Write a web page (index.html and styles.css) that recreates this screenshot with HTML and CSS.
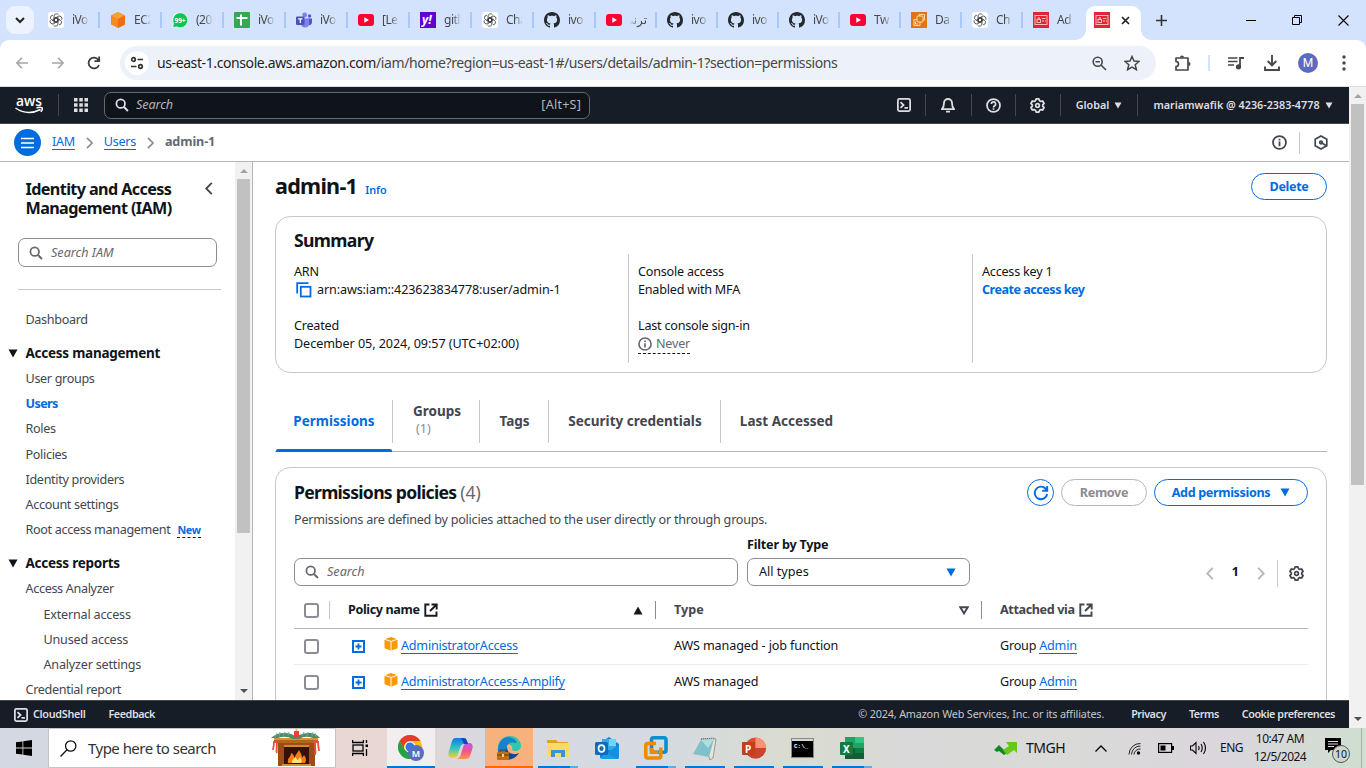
FILE: index.html
```html
<!DOCTYPE html>
<html lang="en">
<head>
<meta charset="utf-8">
<title>admin-1 | IAM</title>
<link rel="stylesheet" href="styles.css">
</head>
<body>
<svg class="sprite" xmlns="http://www.w3.org/2000/svg">
  <symbol id="gpt" viewBox="0 0 16 16"><rect width="16" height="16" rx="3" fill="#fff"/><g fill="none" stroke="#333" stroke-width=".75"><path id="petal" d="M6 8.900V4.200a2.500 2.500 0 0 1 4.600-1.300M10 7.100L7.900 5.900 4.400 8"/><path d="M6 8.900V4.200a2.500 2.500 0 0 1 4.600-1.300M10 7.100L7.900 5.900 4.400 8" transform="rotate(60 8 8)"/><path d="M6 8.900V4.200a2.500 2.500 0 0 1 4.600-1.300M10 7.100L7.900 5.900 4.400 8" transform="rotate(120 8 8)"/><path d="M6 8.900V4.200a2.500 2.500 0 0 1 4.600-1.300M10 7.100L7.900 5.900 4.400 8" transform="rotate(180 8 8)"/><path d="M6 8.900V4.200a2.500 2.500 0 0 1 4.600-1.300M10 7.100L7.900 5.900 4.400 8" transform="rotate(240 8 8)"/><path d="M6 8.900V4.200a2.500 2.500 0 0 1 4.600-1.300M10 7.100L7.900 5.900 4.400 8" transform="rotate(300 8 8)"/></g></symbol>
  <symbol id="cube" viewBox="0 0 16 16"><path d="M8 0l7 3.500v9L8 16l-7-3.500v-9z" fill="#f58a20"/><path d="M8 0l7 3.500L8 7 1 3.500z" fill="#fa9f2f"/><path d="M8 7l7-3.500v9L8 16z" fill="#ee6c12"/></symbol>
  <symbol id="sheet" viewBox="0 0 16 16"><rect width="16" height="16" rx="1" fill="#34a853"/><path d="M7 2.500v11M2.500 6h11" stroke="#fff" stroke-width="2" fill="none"/></symbol>
  <symbol id="teams" viewBox="0 0 16 16"><circle cx="8.700" cy="3" r="2.400" fill="#7b83eb"/><circle cx="13.600" cy="4" r="1.700" fill="#5059c9"/><path d="M11 6.500h5v4a2.800 2.800 0 0 1-4 2.500z" fill="#5059c9"/><path d="M5 6.500h8v5a4 4 0 0 1-8 0z" fill="#7b83eb"/><rect y="4.500" width="8.500" height="8.500" rx="1" fill="#4b53bc"/><path d="M2.200 6.800h4.200M4.300 6.800v4.200" stroke="#fff" stroke-width="1.200"/></symbol>
  <symbol id="yt" viewBox="0 0 16 16"><rect y="2" width="16" height="12" rx="3" fill="#ff0033"/><path d="M6.300 5.300v5.400L11 8z" fill="#fff"/></symbol>
  <symbol id="gh" viewBox="0 0 16 16"><path fill="#24292f" d="M8 0C3.580 0 0 3.580 0 8c0 3.540 2.290 6.530 5.470 7.590.4.070.550-.17.550-.38 0-.19-.010-.82-.010-1.490-2.010.370-2.530-.490-2.690-.940-.090-.230-.480-.940-.820-1.130-.280-.150-.680-.520-.010-.530.630-.010 1.080.580 1.230.820.720 1.210 1.870.870 2.330.660.070-.520.280-.870.510-1.070-1.780-.200-3.640-.890-3.640-3.950 0-.870.310-1.590.820-2.150-.080-.200-.360-1.020.080-2.120 0 0 .670-.210 2.200.820.640-.180 1.320-.270 2-.270s1.360.090 2 .270c1.530-1.040 2.200-.820 2.200-.820.440 1.100.160 1.920.080 2.120.510.560.820 1.270.820 2.150 0 3.070-1.870 3.750-3.650 3.950.290.250.540.730.540 1.480 0 1.070-.010 1.930-.010 2.200 0 .210.150.460.550.380A8.010 8.010 0 0 0 16 8c0-4.420-3.580-8-8-8z"/></symbol>
  <symbol id="ec2" viewBox="0 0 16 16"><rect width="16" height="16" fill="#e27511"/><g fill="none" stroke="#ffdcae" stroke-width="1"><rect x="6" y="4" width="6" height="6" rx="1"/><path d="M8 4V2.500h5.500V8H12M6 7.500H3v6h6V10M4.500 9.500v2.500H7"/></g></symbol>
  <symbol id="iam" viewBox="0 0 16 16"><rect width="16" height="16" fill="#dd2737"/><g fill="none" stroke="#ffb8bd" stroke-width="1"><rect x="2" y="3.500" width="12" height="9"/><rect x="4" y="7.500" width="3.500" height="3"/><path d="M5 7.500V5.800h1.500v1.700M9 6.500h3.500M9 9h2M12 9h1"/></g></symbol>
  <symbol id="search" viewBox="0 0 16 16"><circle cx="6.500" cy="6.500" r="4.900" fill="none" stroke="currentColor" stroke-width="2"/><path d="M10 10l4.800 4.800" stroke="currentColor" stroke-width="2.200"/></symbol>
  <symbol id="shell" viewBox="0 0 16 16"><rect x="1" y="1" width="14" height="14" rx="1.800" fill="none" stroke="currentColor" stroke-width="2"/><path d="M4 4.700L7.500 8 4 11.300M8.500 11.300h4" fill="none" stroke="currentColor" stroke-width="2"/></symbol>
  <symbol id="gear" viewBox="0 0 16 16"><path fill="none" stroke="currentColor" stroke-width="1.900" stroke-linejoin="round" d="M6.500 1h3l.7 2 1.300.7 2-.5 1.500 2.600L13.600 7.300v1.400l1.400 1.500-1.500 2.600-2-.5-1.300.7-.7 2h-3l-.7-2-1.300-.7-2 .5L1 10.200l1.400-1.500V7.300L1 5.800l1.500-2.600 2 .5L5.800 3z"/><circle cx="8" cy="8" r="2" fill="none" stroke="currentColor" stroke-width="1.800"/></symbol>
  <symbol id="info" viewBox="0 0 16 16"><circle cx="8" cy="8" r="6.900" fill="none" stroke="currentColor" stroke-width="1.900"/><path d="M8 7v5M8 4v1.800" stroke="currentColor" stroke-width="1.900"/></symbol>
  <symbol id="down" viewBox="0 0 10 9"><path d="M.5.500h9L5 8.500z" fill="currentColor"/></symbol>
  <symbol id="right" viewBox="0 0 8 14"><path d="M1 1l6 6-6 6" fill="none" stroke="currentColor" stroke-width="2"/></symbol>
  <symbol id="left" viewBox="0 0 8 14"><path d="M7 1L1 7l6 6" fill="none" stroke="currentColor" stroke-width="2"/></symbol>
  <symbol id="ext" viewBox="0 0 14 14"><path d="M5.500 1.500H1.300v11.200h11.200V8.500M7.500 1.500h5.200v5M12.500 1.700L6 8" fill="none" stroke="currentColor" stroke-width="1.900"/></symbol>
  <symbol id="plus" viewBox="0 0 13 13"><rect x="1" y="1" width="11" height="11" fill="none" stroke="#006ce0" stroke-width="2"/><path d="M6.500 3.500v6M3.500 6.500h6" stroke="#006ce0" stroke-width="1.800"/></symbol>
  <symbol id="box" viewBox="0 0 14 14"><path d="M7 0l5.800 2L7 4 1.200 2z" fill="#ff9900"/><path d="M.5 2.700L6.500 4.700V13.500L.5 11.300zM13.500 2.700L7.500 4.700V13.500l6-2.200z" fill="#ff9900"/></symbol>
</svg>

<header class="browser">
  <div class="tabstrip">
    <button class="tab-search"><svg width="10" height="8" viewBox="0 0 10 8"><path d="M1 2l4 4 4-4" fill="none" stroke="#222" stroke-width="2"/></svg></button>
    <div class="tabs">
      <div class="tab"><svg><use href="#gpt"/></svg><span>iVo</span></div>
      <div class="tab"><svg><use href="#cube"/></svg><span>EC2</span></div>
      <div class="tab"><svg viewBox="0 0 16 16"><path d="M.5 15.500l1-4A7.500 7.500 0 1 1 5 15z" fill="#10c454" stroke="#fff" stroke-width=".8"/><text x="8" y="10.800" text-anchor="middle" class="wa-count">99+</text></svg><span>(20</span></div>
      <div class="tab"><svg><use href="#sheet"/></svg><span>iVo</span></div>
      <div class="tab"><svg><use href="#teams"/></svg><span>iVo</span></div>
      <div class="tab"><svg><use href="#yt"/></svg><span>[Le</span></div>
      <div class="tab"><svg viewBox="0 0 16 16"><rect width="16" height="16" fill="#6001d2"/><text x="2" y="11.500" class="yahoo-y">y!</text></svg><span>gitl</span></div>
      <div class="tab"><svg><use href="#gpt"/></svg><span>Cha</span></div>
      <div class="tab"><svg><use href="#gh"/></svg><span>ivo</span></div>
      <div class="tab narrow"><svg><use href="#yt"/></svg><span dir="rtl">ترني</span></div>
      <div class="tab narrow"><svg><use href="#gh"/></svg><span>ivo</span></div>
      <div class="tab narrow"><svg><use href="#gh"/></svg><span>ivo</span></div>
      <div class="tab narrow"><svg><use href="#gh"/></svg><span>iVo</span></div>
      <div class="tab narrow"><svg><use href="#yt"/></svg><span>Tw</span></div>
      <div class="tab narrow"><svg><use href="#ec2"/></svg><span>Da</span></div>
      <div class="tab narrow"><svg><use href="#gpt"/></svg><span>Ch</span></div>
      <div class="tab narrow last"><svg><use href="#iam"/></svg><span>Ad</span></div>
    </div>
    <div class="tab-active"><svg class="fav"><use href="#iam"/></svg><svg width="9" height="9" viewBox="0 0 9 9"><path d="M1 1l7 7M8 1L1 8" stroke="#222" stroke-width="1.700"/></svg></div>
    <svg class="new-tab" width="11" height="11" viewBox="0 0 11 11"><path d="M5.500 0v11M0 5.500h11" stroke="#333" stroke-width="1.600"/></svg>
    <div class="win-controls">
      <svg width="10" height="10" viewBox="0 0 10 10"><path d="M0 5.500h10" stroke="#000"/></svg>
      <svg width="10" height="10" viewBox="0 0 10 10"><path d="M.5 2.500h7v7h-7zM2.500 2.500v-2h7v7h-2" fill="none" stroke="#000"/></svg>
      <svg width="11" height="11" viewBox="0 0 11 11"><path d="M.5.500l10 10M10.500.500l-10 10" stroke="#000" stroke-width="1.100"/></svg>
    </div>
  </div>
  <div class="toolbar">
    <div class="nav-buttons">
      <svg width="12" height="12" viewBox="0 0 12 12" fill="none" stroke="#a7a7a7" stroke-width="1.600"><path d="M12 6H1M6 .8L.9 6 6 11.200"/></svg>
      <svg width="12" height="12" viewBox="0 0 12 12" fill="none" stroke="#a7a7a7" stroke-width="1.600"><path d="M0 6h11M6 .8L11.100 6 6 11.200"/></svg>
      <svg width="14" height="14" viewBox="0 0 14 14" fill="none" stroke="#3c3c3c" stroke-width="1.800"><path d="M12 9A5.400 5.400 0 1 1 11.300 3.800L12.300 5M12.200.500V5.200H7.500"/></svg>
    </div>
    <div class="omnibox">
      <span class="site-info"><svg width="14" height="14" viewBox="0 0 14 14" fill="none" stroke="#333" stroke-width="1.700"><circle cx="3.500" cy="3.500" r="1.800"/><path d="M7.500 3.500H13M1 10.500h5.500"/><circle cx="10.500" cy="10.500" r="1.800"/></svg></span>
      <span class="url"><b>us-east-1.console.aws.amazon.com</b>/iam/home?region=us-east-1#/users/details/admin-1?section=permissions</span>
      <svg class="zoom" width="15" height="15" viewBox="0 0 15 15" fill="none" stroke="#474747" stroke-width="1.600"><circle cx="5.700" cy="5.700" r="4.500"/><path d="M9 9l5 5M3.500 5.700h4.400"/></svg>
      <svg width="16" height="16" viewBox="0 0 16 16" fill="none" stroke="#474747" stroke-width="1.500"><path d="M8 1.500l2 4.600 5 .4-3.800 3.300 1.200 4.900L8 12.100l-4.400 2.600 1.200-4.900L1 6.500l5-.4z"/></svg>
    </div>
    <svg class="puzzle" width="18" height="17" viewBox="0 0 18 17"><path d="M2 3h12v12H2v-3.500a2 2 0 0 0 0-5z" fill="none" stroke="#474747" stroke-width="1.700" stroke-linejoin="round"/><path d="M6 2.500a2 2 0 0 1 4 0M14.500 7a2 2 0 0 1 0 4z" fill="#474747"/></svg>
    <i class="tool-sep"></i>
    <svg class="music" width="17" height="14" viewBox="0 0 17 14"><path d="M0 2h9.500M0 5.500h9.500M0 9h6" stroke="#474747" stroke-width="1.700"/><path d="M12 10.500V2h4" fill="none" stroke="#474747" stroke-width="1.800"/><circle cx="10.500" cy="10.800" r="2.600" fill="#474747"/></svg>
    <svg class="download" width="16" height="16" viewBox="0 0 16 16" fill="none" stroke="#474747" stroke-width="1.900"><path d="M8 0v10M3.700 6L8 10.300 12.300 6M1 11.500V15h14v-3.500"/></svg>
    <span class="avatar">M</span>
    <svg class="kebab" width="4" height="16" viewBox="0 0 4 16" fill="#474747"><circle cx="2" cy="2" r="1.700"/><circle cx="2" cy="8" r="1.700"/><circle cx="2" cy="14" r="1.700"/></svg>
  </div>
</header>

<div class="viewport">
  <div class="page">
    <nav class="aws-nav">
      <svg class="aws-logo" width="28" height="20" viewBox="0 0 28 20"><text x="1" y="11" textLength="26" lengthAdjust="spacingAndGlyphs">aws</text><path d="M.5 13c8 5.500 17 5.500 25 1.500M21.500 13c2-.8 4.500-.8 5.500-.2.500.700 0 2.700-1.300 4" fill="none" stroke="#fff" stroke-width="1.500"/></svg>
      <i class="nav-sep"></i>
      <svg class="apps" width="14" height="14" viewBox="0 0 14 14" fill="#dedee3"><path d="M0 0h3.500v3.500H0zM5.300 0h3.500v3.500H5.300zM10.500 0H14v3.500h-3.500zM0 5.300h3.500v3.500H0zM5.300 5.300h3.500v3.500H5.300zM10.500 5.300H14v3.500h-3.500zM0 10.500h3.500V14H0zM5.300 10.500h3.500V14H5.300zM10.500 10.500H14V14h-3.500z"/></svg>
      <div class="nav-search"><svg><use href="#search"/></svg><em>Search</em><span>[Alt+S]</span></div>
      <div class="nav-tools">
        <div class="nt nt-shell"><svg width="14" height="14"><use href="#shell"/></svg></div>
        <div class="nt nt-bell"><svg width="14" height="15" viewBox="0 0 14 15" fill="none" stroke="currentColor" stroke-width="1.800"><path d="M7 1a4 4 0 0 0-4 4c0 3-.5 4.500-2 6.200h12C11.500 9.500 11 8 11 5a4 4 0 0 0-4-4zM5 13.700h4"/></svg></div>
        <div class="nt nt-help"><svg width="15" height="15" viewBox="0 0 16 16" fill="none" stroke="currentColor" stroke-width="1.900"><circle cx="8" cy="8" r="6.900"/><path d="M5.700 6.500a2.300 2.300 0 1 1 3.500 1.900c-.9.500-1.200.8-1.200 1.600M8 11v1.600"/></svg></div>
        <div class="nt nt-gear"><svg width="15" height="15"><use href="#gear"/></svg></div>
        <div class="nt nt-global"><span>Global</span><svg width="8" height="7"><use href="#down"/></svg></div>
        <div class="nt nt-account"><span>mariamwafik @ 4236-2383-4778</span><svg width="8" height="7"><use href="#down"/></svg></div>
      </div>
    </nav>

    <div class="crumbs">
      <button class="menu"><svg width="13" height="12" viewBox="0 0 13 12"><path d="M0 1.500h13M0 6h13M0 10.500h13" stroke="#fff" stroke-width="1.600"/></svg></button>
      <a>IAM</a><svg class="crumb-arrow"><use href="#right"/></svg><a>Users</a><svg class="crumb-arrow"><use href="#right"/></svg><b>admin-1</b>
      <svg class="crumb-info" width="15" height="15"><use href="#info"/></svg><i></i>
      <svg width="14" height="15" viewBox="0 0 14 15" fill="none" stroke="#424650" stroke-width="1.700"><path d="M7 1l5.800 3.300v6.500L7 14l-5.800-3.200V4.300z"/><circle cx="7" cy="7.500" r="1.300"/><path d="M7 7.500l5 3"/></svg>
    </div>

    <div class="content">
      <aside class="sidebar">
        <div class="side-main">
          <div class="side-title"><h2><span>Identity and Access</span><br><span>Management (IAM)</span></h2><svg width="8" height="13"><use href="#left"/></svg></div>
          <div class="field side-search"><svg><use href="#search"/></svg><em>Search IAM</em></div>
          <hr>
          <ul class="side-list">
            <li class="dash">Dashboard</li>
            <li class="group"><svg width="10" height="9"><use href="#down"/></svg><span>Access management</span></li>
            <li>User groups</li><li class="current">Users</li><li>Roles</li><li>Policies</li><li>Identity providers</li><li>Account settings</li>
            <li>Root access management <b class="new">New</b></li>
            <li class="group"><svg width="10" height="9"><use href="#down"/></svg><span>Access reports</span></li>
            <li>Access Analyzer</li><li class="sub">External access</li><li class="sub">Unused access</li><li class="sub">Analyzer settings</li><li>Credential report</li>
          </ul>
        </div>
        <div class="scrollbar side-scroll"><i class="arrow up"></i><i class="thumb"></i><i class="arrow dn"></i></div>
      </aside>

      <main>
        <div class="heading"><h1>admin-1</h1><a>Info</a><button class="btn delete"><span>Delete</span></button></div>
        <section class="card summary">
          <h2>Summary</h2>
          <div class="columns">
            <div><p>ARN</p><p class="arn"><svg width="16" height="16" viewBox="0 0 16 16" fill="none" stroke="#006ce0" stroke-width="1.800"><path d="M1.200 11.500V1.200h11.300"/><rect x="4.800" y="4.800" width="9.700" height="9.700"/></svg><span>arn:aws:iam::423623834778:user/admin-1</span></p><p class="gap">Created</p><p class="date-value">December 05, 2024, 09:57 (UTC+02:00)</p></div>
            <div><p>Console access</p><p>Enabled with MFA</p><p class="gap">Last console sign-in</p><p class="never"><span><svg width="14" height="14"><use href="#info"/></svg>Never</span></p></div>
            <div><p>Access key 1</p><p class="key">Create access key</p></div>
          </div>
        </section>

        <div class="page-tabs">
          <div class="pt on"><span>Permissions</span></div>
          <div class="pt pt-groups"><span>Groups</span><small>(1)</small></div>
          <div class="pt pt-tags"><span>Tags</span></div>
          <div class="pt pt-sec"><span>Security credentials</span></div>
          <div class="pt pt-last"><span>Last Accessed</span></div>
        </div>

        <section class="card policies">
          <div class="pol-head">
            <h2><span>Permissions policies</span> <small>(4)</small></h2>
            <button class="btn round"><svg width="16" height="16" viewBox="0 0 16 16" fill="none" stroke="#006ce0" stroke-width="1.900"><path d="M14.200 9A6.300 6.300 0 1 1 12.500 3.500L14 5.300M14.200 1v4.800H9.300"/></svg></button>
            <button class="btn remove"><span>Remove</span></button>
            <button class="btn add"><span>Add permissions</span><svg width="10" height="9"><use href="#down"/></svg></button>
          </div>
          <p class="desc">Permissions are defined by policies attached to the user directly or through groups.</p>
          <p class="filter-label"><span>Filter by Type</span></p>
          <div class="filters">
            <div class="field f-search"><svg><use href="#search"/></svg><em>Search</em></div>
            <div class="field f-type"><span>All types</span><svg width="10" height="9"><use href="#down"/></svg></div>
            <div class="pager"><svg width="8" height="13"><use href="#left"/></svg><b>1</b><svg width="8" height="13"><use href="#right"/></svg><i></i><svg class="pgear" width="15" height="15"><use href="#gear"/></svg></div>
          </div>
          <div class="table">
            <div class="tr th">
              <i class="check"></i><i class="vline"></i>
              <div class="c-name"><b>Policy name</b><svg width="14" height="14"><use href="#ext"/></svg><svg class="sort" width="10" height="9" viewBox="0 0 10 9"><path d="M5 .5L9.500 8.500h-9z" fill="#16191f"/></svg></div>
              <div class="c-type"><b>Type</b><svg class="sort" width="10" height="9" viewBox="0 0 10 9"><path d="M1.300 1.200h7.400L5 7.400z" fill="none" stroke="#424650" stroke-width="1.900"/></svg></div>
              <div class="c-via"><b>Attached via</b><svg width="14" height="14"><use href="#ext"/></svg></div>
            </div>
            <div class="tr"><i class="check"></i><svg class="expand"><use href="#plus"/></svg><div class="r-name"><svg><use href="#box"/></svg><a>AdministratorAccess</a></div><div class="r-type">AWS managed - job function</div><div class="r-via">Group <a>Admin</a></div></div>
            <div class="tr"><i class="check"></i><svg class="expand"><use href="#plus"/></svg><div class="r-name"><svg><use href="#box"/></svg><a>AdministratorAccess-Amplify</a></div><div class="r-type">AWS managed</div><div class="r-via">Group <a>Admin</a></div></div>
          </div>
        </section>
      </main>
    </div>

    <footer>
      <svg width="14" height="14"><use href="#shell"/></svg><b class="f-shell">CloudShell</b><b class="f-feedback">Feedback</b>
      <span class="copy">© 2024, Amazon Web Services, Inc. or its affiliates.</span><b class="f-privacy">Privacy</b><b class="f-terms">Terms</b><b class="f-cookie">Cookie preferences</b>
    </footer>
  </div>
  <div class="scrollbar page-scroll"><i class="arrow up"></i><i class="thumb"></i><i class="arrow dn"></i></div>
</div>

<div class="taskbar">
  <div class="start"><svg width="16" height="16" viewBox="0 0 16 16"><path d="M0 2.300L6.500 1.400v6.200H0zM7.300 1.300L16 0v7.600H7.300zM0 8.400h6.500v6.200L0 13.700zM7.300 8.400H16V16l-8.700-1.300z"/></svg></div>
  <div class="search-box">
    <svg width="17" height="17" viewBox="0 0 17 17" fill="none" stroke="#111" stroke-width="1.300"><circle cx="10.700" cy="6" r="5.200"/><path d="M7 9.800L.5 16.500"/></svg>
    <span>Type here to search</span>
    <svg class="fire" width="52" height="38" viewBox="0 0 52 38"><path d="M4 9h44v5H4z" fill="#b4641d"/><path d="M4 9h44v2H4z" fill="#dc9036"/><path d="M8 14h37v23H8z" fill="#9c4d14"/><path d="M14 18h25v19H14z" fill="#351108"/><path d="M14 16h25v2H14z" fill="#d58a32"/><path d="M18 34c-1-6 3-5 3-10 3 1 3 4 4 5 0-4 3-5 4-8 2 4 3 5 3 8 1-2 2-2 2-3 3 4 2 6 1 8z" fill="#f47e16"/><path d="M22 34c0-4 2-4 3-6 2 2 2 3 3 3l2-3c2 3 2 4 1 6z" fill="#ffe17d"/><path d="M12 35h29v2H12z" fill="#d78e36"/><path d="M1 9q8-7 20-4 5 2 5 4 0-2 6-4 12-3 18 4l-7 0q-8-3-14 1h-6q-8-4-15-1z" fill="#4c8a6a"/><g stroke="#6fa98a" stroke-width="1" fill="none"><path d="M5 9l2-5M9 8l1-5M13 7l2-4M18 7l1-4M32 7l2-4M37 7l1-4M42 7l1-4M46 8l-1-4"/></g><path d="M24 2h5v7h-5z" fill="#e8442d"/><circle cx="26.500" cy="1" r="1" fill="#f7b32f"/><path d="M6 11c3 5-1 9 1 13M4 12c0 6-1 7-1 9M46 11c-3 5 1 9-1 15M48 12c0 6 1 8 1 10" fill="none" stroke="#e75142" stroke-width="1.800"/></svg>
  </div>
  <div class="task-view"><svg width="16" height="16" viewBox="0 0 16 16" fill="none" stroke="#000" stroke-width="1.300"><rect x="1" y="5" width="10" height="6"/><path d="M.6 0v2.500h10.800V0M.6 16v-2.500h10.800V16M14.500 0v3M14.500 9v7"/><path d="M13.500 4.500h2.500v2.500h-2.500z" fill="#000" stroke="none"/></svg></div>
  <div class="apps-row">
    <div class="app lit"><svg width="26" height="26" viewBox="0 0 26 26"><circle cx="12" cy="12" r="12" fill="#fbc116"/><path d="M1.600 6a12 12 0 0 1 20.800 0H12a6 6 0 0 0-5.200 9z" fill="#e33b2e"/><path d="M1.600 6a12 12 0 0 0 10.400 18l5.200-9H6.800z" fill="#24a249"/><circle cx="12" cy="12" r="5.600" fill="#fff"/><circle cx="12" cy="12" r="4.500" fill="#3478e8"/><circle cx="18" cy="18" r="8" fill="#5c6bc0"/><text x="18" y="21.500" text-anchor="middle" class="chrome-m">M</text></svg></div>
    <div class="app idle"><svg width="25" height="23" viewBox="0 0 25 23"><defs><linearGradient id="c1" x2="0" y2="1"><stop stop-color="#1874e8"/><stop offset=".5" stop-color="#2cc5c2"/><stop offset="1" stop-color="#ffd02b"/></linearGradient><linearGradient id="c2" x2="0" y2="1"><stop stop-color="#b45cf0"/><stop offset=".5" stop-color="#f55389"/><stop offset="1" stop-color="#ff9645"/></linearGradient></defs><path d="M7 1h9q2 0 3 3l1 3h-4q-3 0-4 4l-2 6q-1 4-4 4H4q-5 0-3-7L4 4q1-3 3-3z" fill="url(#c1)"/><path d="M18 22H9q3-1 4-5l2-7q1-4 5-4h2q4 1 2 7l-2 6q-1 3-4 3z" fill="url(#c2)"/><path d="M13 1h3q2 0 3 3l1 3h-4z" fill="#1548b5"/></svg></div>
    <div class="app edge"><svg width="24" height="24" viewBox="0 0 24 24"><path d="M1 11C2 4 7 0 13 0c7 0 11 5 11 10s-6 6-9 4c2-4-3-7-7-5-3 0-6 1-7 2z" fill="#32c5ac"/><path d="M1 12C2 4 7 1 12 1c5 1 9 5 7 6-4-1-7-1-9 3 0 5 2 9 11 8-4 6-10 7-15 4-4-3-6-6-5-10z" fill="#1584cc"/><path d="M10 12c0 5 5 8 12 5-5 8-15 8-19 3 5-1 5-4 7-8z" fill="#0b4a8f"/><rect y="16" width="12" height="8" rx="1" fill="#b9701d"/><path d="M3 16v-2h6v2M0 19h12" fill="none" stroke="#6b390d"/><path d="M5 18h2v3H5z" fill="#ffd55d"/></svg></div>
    <div class="app run stacked"><svg width="22" height="19" viewBox="0 0 22 19"><path d="M0 1h9l2 2h10v14H0z" fill="#dda520"/><path d="M0 4h22v14H0z" fill="#ffd968"/><path d="M4 11h14v7h-4v-4H8v4H4z" fill="#3794d7"/></svg></div>
    <div class="app idle"><svg width="24" height="22" viewBox="0 0 24 22"><path d="M5 6l9-6 10 7v14H5z" fill="#1c80d4"/><path d="M7 2h14v11H7z" fill="#32a9e9"/><path d="M14 2h7v7h-7z" fill="#6dd5ff"/><path d="M5 21l19-13v12q0 2-2 2H7z" fill="#1b9de6"/><path d="M24 8v12q0 2-2 2L12 16z" fill="#1490df"/><rect y="5" width="13" height="13" rx="1.500" fill="#0f6cbd"/><ellipse cx="6.500" cy="11.500" rx="3" ry="3.400" fill="none" stroke="#fff" stroke-width="1.700"/></svg></div>
    <div class="app run stacked"><svg width="24" height="24" viewBox="0 0 24 24" fill="none" stroke-width="3.600"><rect x="7.500" y="1.800" width="14.500" height="14.500" rx="2" stroke="#0791d1"/><path d="M12 7.500H3.800q-2 0-2 2V20q0 2 2 2h11q2 0 2-2v-8.500M7.500 12v4.300h7" stroke="#f08a00"/></svg></div>
    <div class="app run"><svg width="24" height="23" viewBox="0 0 24 23"><path d="M8 2h15l-3 19-3 2-1-3z" fill="#e6e6dd" stroke="#817c68" stroke-width=".7"/><path d="M8 3l13-1-5 18L0 17z" fill="#7fc0c9"/><path d="M8 3l13-1-6 9z" fill="#b1dde0"/><path d="M8 2l14-1" stroke="#5e6868" stroke-dasharray="1 1"/></svg></div>
    <div class="app run"><svg width="24" height="22" viewBox="0 0 24 22"><circle cx="13.500" cy="11" r="10.500" fill="#d94f2d"/><path d="M13.500.500A10.500 10.500 0 0 1 24 11H13.500z" fill="#ff9172"/><path d="M3 11h21a10.500 10.500 0 0 1-21 0z" fill="#c9432d"/><rect y="5" width="13" height="13" rx="1" fill="#c43e1c"/><text x="3" y="15.500" class="office">P</text></svg></div>
    <div class="app run"><svg width="23" height="20" viewBox="0 0 23 20"><rect x=".5" y=".5" width="22" height="19" fill="#000" stroke="#888"/><path d="M1 1h21v2H1z" fill="#cfd7df"/><text x="3" y="10" class="cmd">C:\_</text></svg></div>
    <div class="app run stacked"><svg width="24" height="22" viewBox="0 0 24 22"><path d="M5 0h19v22H5z" fill="#21a366"/><path d="M15 0h9v6h-9z" fill="#33c481"/><path d="M5 11h19v11H5z" fill="#185c37"/><path d="M15 11h9v5h-9z" fill="#107c41"/><rect y="5" width="13" height="13" rx="1" fill="#107c41"/><text x="3" y="15.500" class="office">X</text></svg></div>
  </div>
  <div class="tray">
    <svg class="stock" width="23" height="15" viewBox="0 0 23 15"><path d="M0 9l5-5 4 4 4 4-3 2-5-4-2 1z" fill="#168526"/><path d="M9 9l6-4-3-4h11v11l-3-3-7 5z" fill="#65c915"/></svg>
    <span class="tmgh">TMGH</span>
    <svg class="chev" width="12" height="7" viewBox="0 0 12 7"><path d="M.5 6.500L6 1l5.500 5.500" fill="none" stroke="#000" stroke-width="1.300"/></svg>
    <svg class="wifi" width="13" height="13" viewBox="0 0 13 13" fill="none" stroke="#222"><path d="M1 12.500A11 11 0 0 1 12.500 1.500M3.500 12.500A8.700 8.700 0 0 1 12.500 4M6 12.500A6 6 0 0 1 12.500 7"/><circle cx="10.500" cy="11" r="1.700" fill="#000" stroke="none"/></svg>
    <svg class="batt" width="16" height="10" viewBox="0 0 16 10"><rect x=".6" y=".6" width="13" height="8.800" fill="none" stroke="#000" stroke-width="1.200"/><path d="M2.500 2.500h5v5h-5zM14 3h2v4h-2z"/></svg>
    <svg class="vol" width="17" height="14" viewBox="0 0 17 14" fill="none" stroke="#000" stroke-width="1.100"><path d="M.5 5h2L6 1.500v11L2.500 9h-2zM8.500 5q1.200 2 0 4M11 3q2.500 4 0 8M13.500 1q4 6 0 12"/></svg>
    <span class="eng">ENG</span>
    <div class="clock"><span>10:47 AM</span><span>12/5/2024</span></div>
    <div class="notify"><svg width="16" height="15" viewBox="0 0 16 15"><path d="M0 0h16v12H6l-3 3v-3H0z"/><path d="M3 3.500h10M3 6h10M3 8.500h6" stroke="#ddd" stroke-width="1"/></svg><span>10</span></div>
    <i class="desk"></i>
  </div>
</div>
</body>
</html>
```

FILE: styles.css
```css
*{box-sizing:border-box}
body{margin:0;width:1366px;height:768px;overflow:hidden;font-family:"Noto Sans","Open Sans",sans-serif;font-size:12.6px;line-height:18px;color:#0f141a;background:#fff;display:flex;flex-direction:column}
h1,h2,p,ul,hr{margin:0;padding:0}
svg{display:block;flex:none}
button{font:inherit;padding:0;margin:0;border:0;background:none;display:flex;align-items:center;justify-content:center}
span,b,a,em{white-space:nowrap}
i{flex:none}
.sprite{position:absolute;width:0;height:0}

/* Browser chrome */
.browser{height:87px;flex:none;background:#d3e3fd;font-family:"Noto Sans","DejaVu Sans",sans-serif}
.tabstrip{height:40px;display:flex;align-items:center}
.tab-search{width:28px;height:28px;margin-left:6px;border-radius:9px;background:#ecf3fe}
.tabs{display:flex;margin-left:14px}
.tab{width:62px;height:16px;display:flex;align-items:center;border-right:2px solid #a8c7fa;padding-left:10px}
.tab:first-child{width:52px;padding-left:0}
.tab.narrow{width:61px}
.tab.last{border-color:transparent}
.tab svg{width:16px;height:16px}
.tab span{display:block;width:17px;margin-left:8px;overflow:hidden;font-size:12px;line-height:16px;letter-spacing:-.5px;color:#474747;-webkit-mask-image:linear-gradient(90deg,#000 50%,transparent);mask-image:linear-gradient(90deg,#000 50%,transparent)}
.tab span[dir=rtl]{-webkit-mask-image:linear-gradient(270deg,#000 50%,transparent);mask-image:linear-gradient(270deg,#000 50%,transparent)}
.tab-active{align-self:flex-end;width:55px;height:34px;margin-left:2px;background:#fff;border-radius:9px 9px 0 0;display:flex;align-items:center;padding:0 0 6px 8px;gap:11px;position:relative}
.tab-active::before,.tab-active::after{content:"";position:absolute;bottom:0;width:10px;height:10px}
.tab-active::before{left:-10px;background:radial-gradient(circle at 0 0,transparent 9.500px,#fff 10px)}
.tab-active::after{right:-10px;background:radial-gradient(circle at 100% 0,transparent 9.500px,#fff 10px)}
.fav{width:16px;height:16px}
.new-tab{margin-left:15px}
.win-controls{margin-left:auto;display:flex;align-items:center;gap:36px;padding-right:17px}
.toolbar{height:47px;background:#fff;border-radius:9px 9px 0 0;border-bottom:1px solid #dcdfe3;display:flex;align-items:center}
.nav-buttons{display:flex;align-items:center;gap:24px;padding-left:16px;width:120px}
.nav-buttons svg:last-child{margin-left:-1px}
.omnibox{width:1036px;height:34px;border-radius:17px;background:#edf1fa;display:flex;align-items:center;padding:0 16px 0 5px}
.site-info{width:24px;height:24px;border-radius:50%;background:#fff;display:flex;align-items:center;justify-content:center}
.url{margin-left:8px;font-size:14px;color:#474747;letter-spacing:-.4px}
.url b{font-weight:400;color:#1f1f1f}
.zoom{margin-left:auto;margin-right:17px}
.puzzle{margin-left:18px}
.tool-sep{width:2px;height:16px;background:#d3e3fd;margin-left:16px}
.music{margin-left:18px}
.download{margin-left:19px}
.avatar{width:20px;height:20px;border-radius:50%;background:#5c6bc0;color:#fff;font:12px/20px Roboto,sans-serif;text-align:center;margin-left:18px}
.kebab{margin-left:24px}

/* Console page */
.viewport{height:641px;flex:none;display:flex}
.page{width:1349px;display:flex;flex-direction:column}
.aws-nav{height:37px;flex:none;background:#161d26;border-bottom:1px solid #424650;color:#dedee3;display:flex;align-items:center}
.aws-logo{margin-left:15px}
.aws-logo text{font:600 13.500px "Open Sans",sans-serif;fill:#fff}
.nav-sep{width:1px;height:22px;background:#424650;margin-left:15px}
.apps{margin-left:15px}
.nav-search{margin-left:16px;width:486px;height:27px;border:1px solid #656871;border-radius:7px;background:#0f141a;display:flex;align-items:center;padding:0 8px 0 10px}
.nav-search svg{width:14px;height:14px}
.nav-search em{margin-left:7px;color:#b4b4bb;letter-spacing:-.1px}
.nav-search span{margin-left:auto;color:#b4b4bb;letter-spacing:.2px}
.nav-tools{margin-left:auto;display:flex;font-size:10.800px;font-weight:600}
.nt{height:22px;display:flex;align-items:center;justify-content:center;border-left:1px solid #424650}
.nt-shell{border:0;width:43px}
.nt-bell{width:46px;padding-right:2px}.nt-help{width:44px;padding-right:1px}.nt-gear{width:45px;padding-right:1px}
.nt-global{width:77px;gap:5px}
.nt-account{width:212px;gap:5px;padding-right:1px}
.crumbs{height:38px;flex:none;border-bottom:1px solid #b4b4bb;display:flex;align-items:center;padding:0 21px 0 14px}
.menu{width:27px;height:27px;border-radius:50%;background:#006ce0;margin-right:11px}
a{color:#006ce0;text-decoration:none}
.crumbs a{border-bottom:1px solid #006ce0;line-height:15px;letter-spacing:-.3px}
.crumbs a,.crumbs b{margin-top:-2px}
.crumbs a{margin-top:-1px}
.crumb-arrow{width:7px;height:12px;margin:0 11px;color:#8c8c94}
.crumbs b{color:#656871;letter-spacing:-.1px}
.crumb-info{margin-left:auto;color:#424650}
.crumbs i{width:1px;height:22px;background:#c6c6cd;margin:0 14px 0 12px}
.content{height:538px;flex:none;display:flex}
.sidebar{width:253px;flex:none;border-right:1px solid #b4b4bb;display:flex;overflow:hidden}
.side-main{width:235px;flex:none;padding:18px 14px 0 18px}
.side-title{display:flex;justify-content:space-between;padding:0 8px 0 7.500px}
.side-title svg{margin-top:2px;color:#424650}
.side-title h2{font-size:16.200px;line-height:19px;letter-spacing:-.62px}
.field{border:1px solid #8c8c94;border-radius:7px;display:flex;align-items:center;background:#fff}
.field>svg:first-child{width:14px;height:14px;margin-left:10px;color:#656871}
.field em{color:#656871;margin-left:8px}
.side-search{width:199px;height:29px;margin-top:20px}
hr{border:0;height:1px;background:#c6c6cd;margin-top:22px}
.side-list{list-style:none;padding-top:17px;color:#424650}
.side-list li{height:25.240px;line-height:25.240px;padding-left:7.500px;white-space:nowrap;letter-spacing:-.33px}
.side-list .sub{padding-left:25.500px;letter-spacing:-.2px}
.side-list .group{display:flex;align-items:center;margin-top:8.500px;margin-left:-10px;padding:0;font-weight:700;font-size:13.500px;color:#0f141a;gap:7.500px;letter-spacing:-.25px}
.side-list .current{color:#006ce0;font-weight:700;letter-spacing:-.6px}
.new{font-size:10.800px;line-height:14px;color:#006ce0;border-bottom:1px dashed #16191f;margin-left:4px;display:inline-block}
.scrollbar{width:17px;flex:none;background:#f1f1f1;display:flex;flex-direction:column;align-items:center}
.thumb{width:13px;background:#c1c1c1}
.arrow{width:0;height:0;border:4px solid transparent}
.up{border-bottom-color:#a3a3a3;border-top:0;margin:7px 0 6px}
.dn{border-top-color:#505050;border-bottom:0;margin:auto 0 7px}
.side-scroll .thumb{height:354px}
.page-scroll .thumb{height:381px}
main{width:1096px;padding:0 22px;overflow:hidden;height:538px}
.heading{height:54px;padding-top:11px;display:flex;align-items:flex-start}
.heading h1{font-size:21.600px;line-height:27px;letter-spacing:-.75px;margin-top:-1px}
.heading a{font-size:10.800px;font-weight:600;margin:8px 0 0 8px}
.btn{height:27px;border:1px solid #006ce0;border-radius:14px;color:#006ce0;font-weight:700;letter-spacing:-.35px}
.delete{width:76px;margin-left:auto}
.card{border:1px solid #c6c6cd;border-radius:15px;background:#fff}
.summary{height:157px;padding:12px 18px 0}
.card h2{font-size:17.600px;line-height:23px;letter-spacing:-.65px}
.columns{display:grid;grid-template-columns:334px 344px 344px;height:109px;margin-top:2px}
.columns>div{padding-top:9px}
.columns>div+div{border-left:1px solid #c6c6cd;padding-left:9px}
.columns p{letter-spacing:-.22px;height:18px;white-space:nowrap}
.columns .gap{margin-top:18px}
.columns .arn{display:flex;align-items:center;gap:4px;padding-left:2px;letter-spacing:-.12px}
.arn span{margin-left:1px}
.columns .date-value{letter-spacing:-.07px}
.never span{display:inline-flex;align-items:center;gap:4px;color:#656871;border-bottom:1px dashed #16191f;height:19px}
.columns .key{font-weight:700;color:#006ce0;letter-spacing:-.5px}
.page-tabs{height:60px;margin-top:19px;border-bottom:1px solid #b4b4bb;display:flex;font-weight:700;color:#424650;font-size:13.500px}
.pt{height:60px;padding-bottom:2px;display:flex;flex-direction:column;align-items:center;justify-content:center;position:relative}
.pt:not(.pt-last)::after{content:"";position:absolute;right:0;top:8px;height:43px;border-right:1px solid #c6c6cd}
.on{width:118px;color:#006ce0}
.on::before{content:"";position:absolute;left:1px;right:1px;bottom:0;height:3px;border-radius:2px 2px 0 0;background:#006ce0}
.pt-groups{width:87px;align-items:flex-start;padding-left:20px;padding-bottom:5px}
.pt-groups small{font-size:12.600px;font-weight:400;color:#8c8c94;line-height:17px;padding-left:3px}
.pt-tags{width:69px}.pt-sec{width:172px}.pt-last{width:131px}
.policies{height:300px;margin-top:15px;padding:11px 18px 0}
.pol-head{display:flex;align-items:center;height:27px}
.pol-head h2{margin-right:auto;letter-spacing:-.72px;line-height:23px}
.pol-head small{font-size:17.600px;font-weight:400;color:#656871;letter-spacing:0}
.round{width:27px;margin-right:7px}
.remove{width:86px;border-color:#b4b4bb;color:#8c8c94;margin-right:7px}
.add{width:154px;gap:10px}
.desc{margin-top:5px;color:#424650;letter-spacing:-.23px;white-space:nowrap}
.filter-label{margin:7px 0 0 453px;font-weight:700;letter-spacing:-.2px}
.filters{display:flex;margin-top:4px;height:28px}
.f-search{width:444px}
.f-type{width:223px;margin-left:9px;padding:0 13px 0 11px;justify-content:space-between;color:#0f141a}
.f-type svg{color:#006ce0}
.pager{margin-left:auto;display:flex;align-items:center;padding-right:4px;padding-top:2px;color:#b4b4bb}
.pager b{color:#0f141a;margin:-2px 18px 0}
.pager i{width:1px;height:27px;background:#c6c6cd;margin:0 11px 0 12px}
.pgear{color:#424650}
.tr{height:36px;border-bottom:1px solid #ebebf0;display:flex;align-items:center;padding:0 0 1px 10px}
.th{height:43px;padding-top:6px;padding-bottom:0;border-color:#b4b4bb;color:#424650}
.check{width:15px;height:15px;border:2px solid #8c8c94;border-radius:3px;background:#fff}
.vline{width:1px;height:18px;background:#c6c6cd;margin-left:10px}
.c-name,.c-type{height:18px;display:flex;align-items:center;border-right:1px solid #8c8c94}
.c-name{width:326px;padding-left:18px;padding-right:12px;color:#16191f}
.c-name b,.c-via b{letter-spacing:-.38px}
.c-type{width:326px;padding-left:18px;padding-right:12px}
.c-via{display:flex;padding-left:18px;align-items:center}
.th b+svg:not(.sort){margin-left:4px}
.sort{margin-left:auto}
.expand{width:13px;height:13px;margin-left:33px;margin-top:1px}
.r-name{display:flex;align-items:center;width:291px;margin-left:18px;letter-spacing:-.23px}
.r-name svg{width:14px;height:14px;margin:-4px 3px 0 1px}
.tr a{border-bottom:1px solid #006ce0;line-height:15px;display:inline-block}
.r-type{width:326px;letter-spacing:-.12px;white-space:nowrap}
.r-via{letter-spacing:-.22px}
footer{height:28px;flex:none;background:#161d26;border-top:1px solid #424650;color:#dedee3;font-size:10.800px;display:flex;align-items:center;padding:0 14px}
footer b,footer span{margin-top:-2px}
footer b{font-weight:600;letter-spacing:-.45px}
footer .f-shell{margin-left:5px;letter-spacing:-.3px}
.f-feedback{margin-left:23px}
.copy{margin-left:auto;color:#c6c6cd;letter-spacing:-.16px}
.f-privacy{margin-left:27px}.f-terms{margin-left:23px}.f-cookie{margin-left:23px}

/* Windows taskbar */
.taskbar{height:40px;flex:none;display:flex;background:linear-gradient(90deg,#d3d8e2 0,#dcd9dc 24%,#e7d5d0 27%,#d7d9e0 36%,#d5dae2 48%,#dadccf 58%,#d9d9d9 66%,#dadad8 78%,#dbd6dd 90%,#cfdfd0 100%);color:#111}
.start{width:48px;display:flex;align-items:center;justify-content:center}
.search-box{width:288px;border:1px solid #c4c4c4;background:#fff;display:flex;align-items:center;padding-left:11px;overflow:hidden}
.search-box span{margin-left:11px;font-size:15px;letter-spacing:-.53px;color:#333}
.fire{margin-left:auto;margin-right:13px;align-self:flex-end}
.task-view{width:51px;background:#e8d7d3;display:flex;align-items:center;justify-content:center;padding-right:3px}
.apps-row{display:flex;gap:1px}
.app{width:48px;height:40px;display:flex;align-items:center;justify-content:center;position:relative}
.lit{background:#f0eeee}
.lit::after,.run::after,.edge::after{content:"";position:absolute;left:4px;width:40px;bottom:0;height:2px;background:#0078d7}
.lit::after,.edge::after{left:0;width:48px}
.edge{background:#f7b17d}
.edge::after{background:#ff6a00}
.stacked::after{background:linear-gradient(90deg,#0078d7 80%,#65a8e2 80%)}
.app.run svg{margin-left:-1px}
.chrome-m{font:600 9px "Noto Sans",sans-serif;fill:#fff}
.office{font:700 10px "Noto Sans",sans-serif;fill:#fff}
.cmd{font:700 6px "Liberation Mono",monospace;fill:#fff}
.wa-count{font:700 6.500px "Noto Sans",sans-serif;fill:#fff}
.yahoo-y{font:italic 700 12px "Noto Sans",sans-serif;fill:#fff}
.tray{margin-left:auto;display:flex;align-items:center;height:40px}
.tmgh{font-size:14px;letter-spacing:-.5px;margin-left:9px;width:40px}
.chev{margin-left:29px}
.wifi{margin-left:21px}
.batt{margin-left:17px}
.vol{margin-left:16px}
.eng{font-size:12px;margin-left:13px;width:24px;letter-spacing:-.5px}
.clock{width:72px;display:flex;flex-direction:column;align-items:center;font-size:12px;letter-spacing:-.5px;line-height:18px}
.notify{width:26px;height:24px;margin-left:9px;margin-top:3px;position:relative}
.notify span{position:absolute;left:7px;top:7px;width:18px;height:18px;border:1px solid #555;border-radius:50%;background:#cfd7cf;font-size:10.500px;line-height:16px;text-align:center}
.desk{width:1px;height:40px;background:#a6b0a6;margin:0 4px 0 10px}
```
